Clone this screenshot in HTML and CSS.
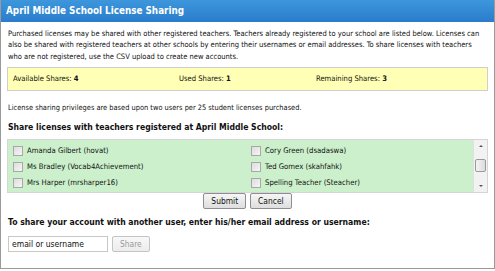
FILE: index.html
```html
<!DOCTYPE html>
<html lang="en">
<head>
  <meta charset="UTF-8" />
  <title>License Sharing</title>
  <link rel="stylesheet" href="styles.css">
</head>
<body>

<div class="panel">
  <div class="header">April Middle School License Sharing</div>

  <div class="content">
    <p class="intro">Purchased licenses may be shared with other registered teachers. Teachers already registered to your school are listed below. Licenses can also be shared with registered teachers at other schools by entering their usernames or email addresses. To share licenses with teachers who are not registered, use the CSV upload to create new accounts.</p>

    <div class="stats">
      <span class="stat s1">Available Shares: <b>4</b></span>
      <span class="stat s2">Used Shares: <b>1</b></span>
      <span class="stat s3">Remaining Shares: <b>3</b></span>
    </div>

    <p class="note">License sharing privileges are based upon two users per 25 student licenses purchased.</p>

    <h2>Share licenses with teachers registered at April Middle School:</h2>

    <div class="teachers">
      <div class="list">
        <label class="row"><span class="box"></span>Amanda Gilbert (hovat)</label>
        <label class="row"><span class="box"></span>Cory Green (dsadaswa)</label>
        <label class="row"><span class="box"></span>Ms Bradley (Vocab4Achievement)</label>
        <label class="row"><span class="box"></span>Ted Gomex (skahfahk)</label>
        <label class="row"><span class="box"></span>Mrs Harper (mrsharper16)</label>
        <label class="row"><span class="box"></span>Spelling Teacher (Steacher)</label>
      </div>
      <div class="scrollbar">
        <span class="arrow up"></span>
        <span class="thumb"></span>
        <span class="arrow down"></span>
      </div>
    </div>

    <div class="actions">
      <button class="btn">Submit</button>
      <button class="btn">Cancel</button>
    </div>

    <h2 class="share-title">To share your account with another user, enter his/her email address or username:</h2>

    <div class="share">
      <input type="text" class="user" value="email or username">
      <button class="btn" disabled>Share</button>
    </div>
  </div>
</div>

</body>
</html>
```

FILE: styles.css
```css
:root {
  --border: #9a9a9a; --text: #111; --yellow: #ffffb5; --green: #ccf0cc;
}
body { margin: 0; font-family: "DejaVu Sans Condensed", "DejaVu Sans", sans-serif; color: var(--text); }
.panel {
  width: 493px; height: 268px; border: 1px solid var(--border); border-top: none;
  background: #fff;
}
.header {
  height: 22px; line-height: 21px; padding-left: 5px;
  background: linear-gradient(#3d97dc, #2a7ccb);
  color: #fff; font-weight: bold; font-size: 9.8px;
}
.content { padding: 0 6px; }
.intro { margin: 6px 1px 0; font-size: 7.5px; line-height: 11.3px; }
.stats {
  margin-top: 5px; height: 22px; display: flex; align-items: center;
  background: var(--yellow); border: 1px solid #cfcfcf; font-size: 7.6px;
}
.stat { display: block; }
.s1 { margin-left: 5px; width: 166px; }
.s2 { width: 137px; }
.note { margin: 12px 0 0 1px; font-size: 7.4px; }
h2 { margin: 10px 0 0 1px; font-size: 8.6px; }
.teachers {
  margin-top: 7px; height: 52px; display: flex;
  background: var(--green); border: 1px solid #d5d5d5;
}
.list {
  flex: 1; display: grid; grid-template-columns: 238px 1fr;
  grid-auto-rows: 16px; padding: 3px 0 0 5px; font-size: 7.7px;
}
.row { display: flex; align-items: center; }
.box {
  width: 10px; height: 10px; margin-right: 4px; box-sizing: border-box;
  border: 1px solid #a8a8a8; background: linear-gradient(135deg, #dcdcdc, #f6f6f6);
}
.scrollbar {
  width: 13px; display: flex; flex-direction: column; align-items: center;
  justify-content: space-between; background: #f2f2f2; border-left: 1px solid #e0e0e0;
}
.arrow { width: 0; height: 0; border-left: 2px solid transparent; border-right: 2px solid transparent; margin: 5px 0; }
.up { border-bottom: 2px solid #555; }
.down { border-top: 2px solid #555; }
.thumb {
  width: 11px; height: 13px; box-sizing: border-box; border: 1px solid #9a9a9a;
  border-radius: 2px; background: linear-gradient(90deg, #f4f4f4, #dcdcdc);
}
.actions { display: flex; justify-content: center; gap: 4px; margin-top: 0; }
.btn {
  height: 16px; padding: 0 7px; font-family: inherit; font-size: 8.4px; color: #111;
  border: 1px solid #8e8e8e; border-radius: 2px;
  background: linear-gradient(#f6f6f6, #dedede);
}
.btn:disabled { color: #999; border-color: #c4c4c4; background: linear-gradient(#f8f8f8, #ececec); }
.share-title { margin-top: 8px; }
.share { display: flex; gap: 4px; margin-top: 9px; margin-left: 1px; }
.user {
  width: 100px; height: 16px; box-sizing: border-box; padding: 0 3px;
  border: 1px solid #c8c8c8; font-family: inherit; font-size: 8.5px; color: #111;
}
```
